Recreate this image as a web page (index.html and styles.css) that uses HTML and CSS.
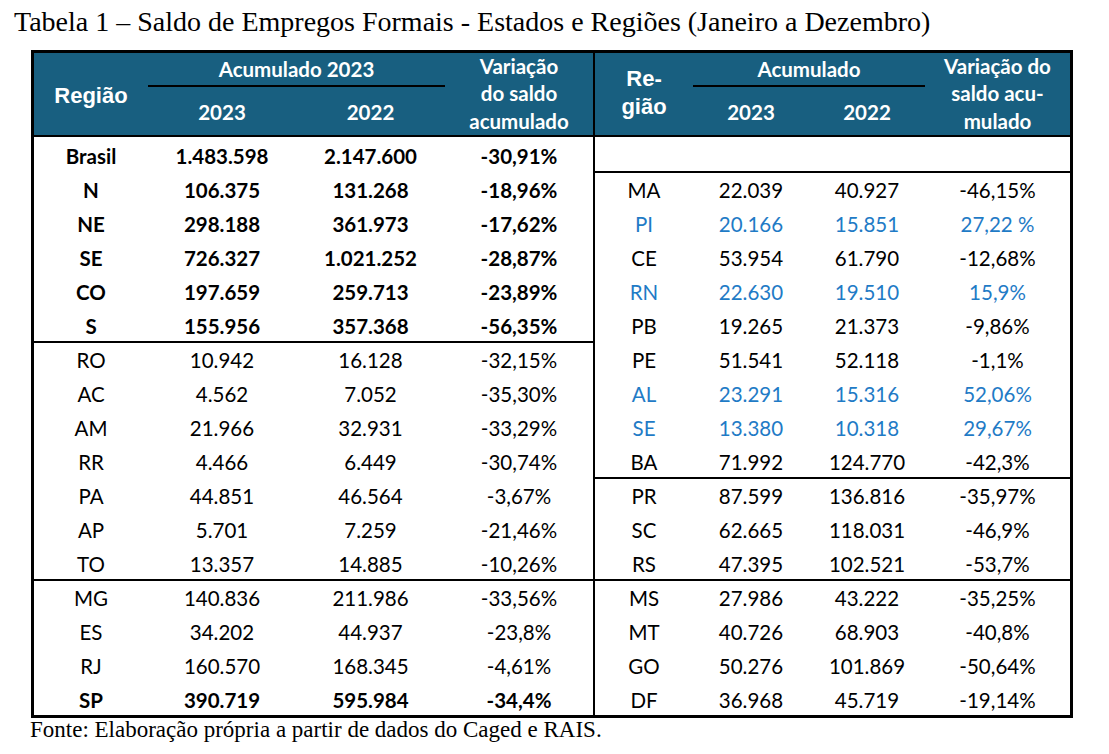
FILE: index.html
```html
<!DOCTYPE html>
<html lang="pt-BR">
<head>
<meta charset="utf-8">
<title>Tabela 1</title>
<link rel="stylesheet" href="styles.css">
</head>
<body>
<h1 class="title">Tabela 1 – Saldo de Empregos Formais - Estados e Regiões (Janeiro a Dezembro)</h1>
<div class="table">
  <div class="half half-left">
    <div class="head cols-l">
      <div class="h-reg">Região</div>
      <div class="h-acum">Acumulado 2023</div>
      <div class="h-var">Variação<br>do saldo<br>acumulado</div>
      <div class="h-year">2023</div>
      <div class="h-year">2022</div>
    </div>
    <div class="row cols-l bold"><span>Brasil</span><span>1.483.598</span><span>2.147.600</span><span>-30,91%</span></div>
    <div class="row cols-l bold"><span>N</span><span>106.375</span><span>131.268</span><span>-18,96%</span></div>
    <div class="row cols-l bold"><span>NE</span><span>298.188</span><span>361.973</span><span>-17,62%</span></div>
    <div class="row cols-l bold"><span>SE</span><span>726.327</span><span>1.021.252</span><span>-28,87%</span></div>
    <div class="row cols-l bold"><span>CO</span><span>197.659</span><span>259.713</span><span>-23,89%</span></div>
    <div class="row cols-l bold"><span>S</span><span>155.956</span><span>357.368</span><span>-56,35%</span></div>
    <div class="row cols-l sep"><span>RO</span><span>10.942</span><span>16.128</span><span>-32,15%</span></div>
    <div class="row cols-l"><span>AC</span><span>4.562</span><span>7.052</span><span>-35,30%</span></div>
    <div class="row cols-l"><span>AM</span><span>21.966</span><span>32.931</span><span>-33,29%</span></div>
    <div class="row cols-l"><span>RR</span><span>4.466</span><span>6.449</span><span>-30,74%</span></div>
    <div class="row cols-l"><span>PA</span><span>44.851</span><span>46.564</span><span>-3,67%</span></div>
    <div class="row cols-l"><span>AP</span><span>5.701</span><span>7.259</span><span>-21,46%</span></div>
    <div class="row cols-l"><span>TO</span><span>13.357</span><span>14.885</span><span>-10,26%</span></div>
    <div class="row cols-l sep"><span>MG</span><span>140.836</span><span>211.986</span><span>-33,56%</span></div>
    <div class="row cols-l"><span>ES</span><span>34.202</span><span>44.937</span><span>-23,8%</span></div>
    <div class="row cols-l"><span>RJ</span><span>160.570</span><span>168.345</span><span>-4,61%</span></div>
    <div class="row cols-l bold"><span>SP</span><span>390.719</span><span>595.984</span><span>-34,4%</span></div>
  </div>
  <div class="half half-right">
    <div class="head cols-r">
      <div class="h-reg h-reg-r">Re-<br>gião</div>
      <div class="h-acum">Acumulado</div>
      <div class="h-var">Variação do<br>saldo acu-<br>mulado</div>
      <div class="h-year">2023</div>
      <div class="h-year">2022</div>
    </div>
    <div class="row cols-r"><span></span><span></span><span></span><span></span></div>
    <div class="row cols-r sep"><span>MA</span><span>22.039</span><span>40.927</span><span>-46,15%</span></div>
    <div class="row cols-r blue"><span>PI</span><span>20.166</span><span>15.851</span><span>27,22 %</span></div>
    <div class="row cols-r"><span>CE</span><span>53.954</span><span>61.790</span><span>-12,68%</span></div>
    <div class="row cols-r blue"><span>RN</span><span>22.630</span><span>19.510</span><span>15,9%</span></div>
    <div class="row cols-r"><span>PB</span><span>19.265</span><span>21.373</span><span>-9,86%</span></div>
    <div class="row cols-r"><span>PE</span><span>51.541</span><span>52.118</span><span>-1,1%</span></div>
    <div class="row cols-r blue"><span>AL</span><span>23.291</span><span>15.316</span><span>52,06%</span></div>
    <div class="row cols-r blue"><span>SE</span><span>13.380</span><span>10.318</span><span>29,67%</span></div>
    <div class="row cols-r"><span>BA</span><span>71.992</span><span>124.770</span><span>-42,3%</span></div>
    <div class="row cols-r sep"><span>PR</span><span>87.599</span><span>136.816</span><span>-35,97%</span></div>
    <div class="row cols-r"><span>SC</span><span>62.665</span><span>118.031</span><span>-46,9%</span></div>
    <div class="row cols-r"><span>RS</span><span>47.395</span><span>102.521</span><span>-53,7%</span></div>
    <div class="row cols-r sep"><span>MS</span><span>27.986</span><span>43.222</span><span>-35,25%</span></div>
    <div class="row cols-r"><span>MT</span><span>40.726</span><span>68.903</span><span>-40,8%</span></div>
    <div class="row cols-r"><span>GO</span><span>50.276</span><span>101.869</span><span>-50,64%</span></div>
    <div class="row cols-r"><span>DF</span><span>36.968</span><span>45.719</span><span>-19,14%</span></div>
  </div>
</div>
<p class="source">Fonte: Elaboração própria a partir de dados do Caged e RAIS.</p>
</body>
</html>
```
FILE: styles.css
```css
html, body {
  margin: 0;
  padding: 0;
  background: #ffffff;
}

body {
  width: 1109px;
  height: 754px;
  overflow: hidden;
  color: #000;
}

.title {
  margin: 0;
  padding: 6px 0 0 14px;
  font-family: "Liberation Serif", "Times New Roman", serif;
  font-weight: normal;
  font-size: 28px;
  line-height: 32px;
  white-space: nowrap;
}

.table {
  margin: 12px 0 0 31px;
  width: 1036px;
  border: 3px solid #000;
  display: flex;
  font-family: Lato, "Open Sans", sans-serif;
  font-size: 20.5px;
}

.half-left {
  width: 559px;
  border-right: 2px solid #000;
}

.half-right {
  width: 475px;
}

.cols-l {
  display: grid;
  grid-template-columns: 114px 148px 149px 148px;
}

.cols-r {
  display: grid;
  grid-template-columns: 98px 116px 116px 145px;
}

.head {
  grid-template-rows: 34px 48px;
  background: #185f80;
  color: #ffffff;
  font-weight: bold;
  border-bottom: 2px solid #000;
  text-align: center;
}

.h-reg {
  grid-row: 1 / 3;
  grid-column: 1;
  align-self: center;
  font-family: "Liberation Sans", Arial, sans-serif;
  font-size: 22px;
  line-height: 28px;
  padding-top: 4px;
}

.h-reg-r {
  line-height: 28px;
  padding-top: 0;
  padding-bottom: 2px;
}

.h-acum {
  grid-row: 1;
  grid-column: 2 / 4;
  border-bottom: 2px solid #000;
  display: flex;
  align-items: center;
  justify-content: center;
  line-height: 24px;
}

.h-var {
  grid-row: 1 / 3;
  grid-column: 4;
  align-self: center;
  line-height: 27.5px;
}

.h-year {
  grid-row: 2;
  display: flex;
  align-items: center;
  justify-content: center;
  padding-top: 2px;
}

.row {
  height: 34px;
  box-sizing: border-box;
  align-items: center;
  text-align: center;
  line-height: 24px;
}

.row span {
  padding-top: 3px;
}

.row.sep {
  border-top: 2px solid #000;
}

.row.sep span {
  padding-top: 1px;
}

.bold {
  font-weight: bold;
}

.blue {
  color: #1f7bc6;
}

.source {
  margin: 0 0 0 30px;
  font-family: "Liberation Serif", "Times New Roman", serif;
  font-size: 23px;
  line-height: 20px;
  padding-top: 2px;
  white-space: nowrap;
}
```
